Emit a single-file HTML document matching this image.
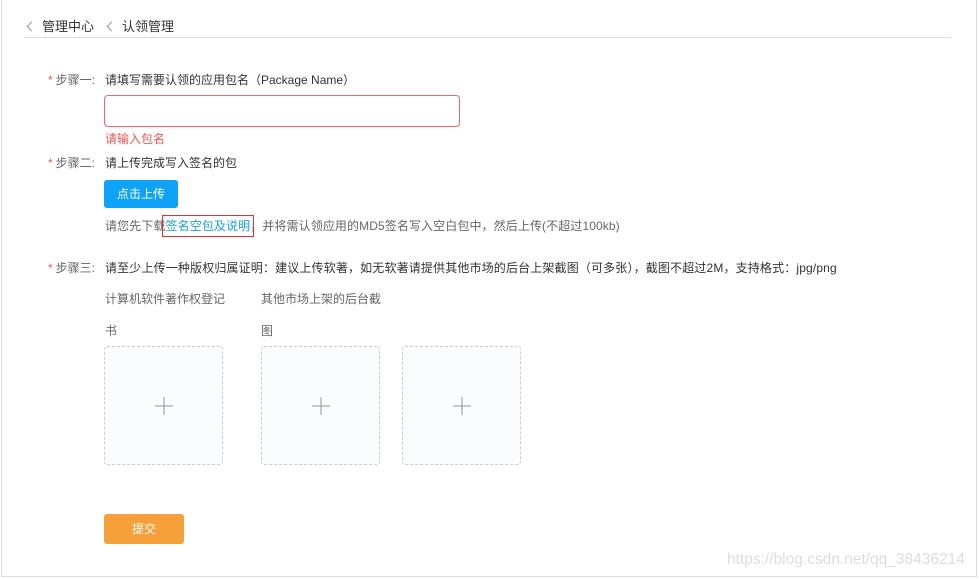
<!DOCTYPE html>
<html><head><meta charset="utf-8"><style>
*{margin:0;padding:0;box-sizing:border-box}
body{width:979px;height:579px;background:#fff;position:relative;overflow:hidden;font-family:"Liberation Sans","Noto Sans CJK SC",sans-serif;font-size:12px;color:#333}
.a{position:absolute;white-space:nowrap}
.frame{position:absolute;left:1px;top:-2px;width:976px;height:579px;border:1px solid #ddd}
.lbl{color:#666}.lbl b{color:#e55;font-weight:normal;margin-right:3px}
.box{position:absolute;width:119px;height:119px;border:1px dashed #ccc;border-radius:3px;background:#fbfcfd}
.box:before{content:"";position:absolute;left:50%;top:50%;width:18px;height:1px;background:#8c939d;transform:translate(-50%,-50%)}
.box:after{content:"";position:absolute;left:50%;top:50%;width:1px;height:18px;background:#8c939d;transform:translate(-50%,-50%)}
.chev{display:inline-block;width:7px;height:7px;border-left:1px solid #999;border-bottom:1px solid #999;transform:rotate(45deg);margin-right:7px;vertical-align:1px}
</style></head><body>
<div class="frame"></div>
<div class="a" style="left:28px;top:16px;font-size:13px;color:#333"><span class="chev"></span>管理中心</div>
<div class="a" style="left:108px;top:16px;font-size:13px;color:#333"><span class="chev"></span>认领管理</div>
<div class="a" style="left:24px;top:37px;width:927px;height:1px;background:#ddd"></div>

<div class="a lbl" style="left:48px;top:71px"><b>*</b>步骤一:</div>
<div class="a" style="left:105px;top:71px">请填写需要认领的应用包名（Package Name）</div>
<div class="a" style="left:104px;top:95px;width:356px;height:32px;border:1px solid #e66;border-radius:4px"></div>
<div class="a" style="left:105px;top:130px;color:#e55">请输入包名</div>

<div class="a lbl" style="left:48px;top:154px"><b>*</b>步骤二:</div>
<div class="a" style="left:105px;top:154px">请上传完成写入签名的包</div>
<div class="a" style="left:104px;top:180px;width:74px;height:28px;background:#0ea3f6;border-radius:3px;color:#fff;text-align:center;line-height:28px">点击上传</div>
<div class="a" style="left:105px;top:217px;color:#666;letter-spacing:0.1px">请您先下载<span style="color:#1aa0e0;outline:1px solid #d33;outline-offset:3px">签名空包及说明</span>，并将需认领应用的MD5签名写入空白包中，然后上传(不超过100kb)</div>

<div class="a lbl" style="left:48px;top:259px"><b>*</b>步骤三:</div>
<div class="a" style="left:105px;top:259px;letter-spacing:0.15px">请至少上传一种版权归属证明：建议上传软著，如无软著请提供其他市场的后台上架截图（可多张），截图不超过2M，支持格式：jpg/png</div>
<div class="a" style="left:105px;top:290px;color:#666">计算机软件著作权登记</div>
<div class="a" style="left:105px;top:322px;color:#666">书</div>
<div class="a" style="left:261px;top:290px;color:#666">其他市场上架的后台截</div>
<div class="a" style="left:261px;top:322px;color:#666">图</div>
<div class="box" style="left:104px;top:346px"></div>
<div class="box" style="left:261px;top:346px"></div>
<div class="box" style="left:402px;top:346px"></div>

<div class="a" style="left:104px;top:514px;width:80px;height:30px;background:#f5a03a;border-radius:3px;color:#fff;text-align:center;line-height:30px">提交</div>
<div class="a" style="left:727px;top:551px;font-size:15.5px;color:#ddd">https://blog.csdn.net/qq_38436214</div>
</body></html>
